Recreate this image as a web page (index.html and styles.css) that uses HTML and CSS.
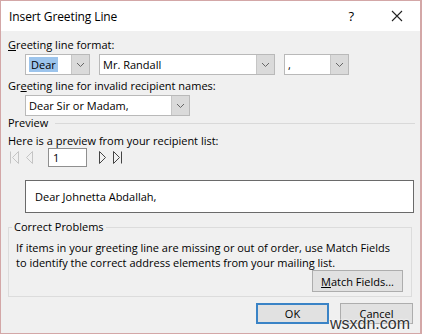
FILE: index.html
```html
<!DOCTYPE html>
<html>
<head>
<meta charset="utf-8">
<link rel="stylesheet" href="styles.css">
</head>
<body>
<div class="dialog">
  <div class="titlebar">
    <span class="title">Insert Greeting Line</span>
    <span class="help">?</span>
    <svg class="close" width="12" height="12" viewBox="0 0 12 12"><path d="M1 1L11 11M11 1L1 11" stroke="#222" stroke-width="1.1" fill="none"/></svg>
  </div>
  <div class="content">
    <div class="label l1"><u>G</u>reeting line format:</div>
    <div class="row r1">
      <div class="combo w-dear"><span class="field"><span class="sel">Dear</span></span><span class="drop"><svg width="9" height="6" viewBox="0 0 9 6"><path d="M1 1L4.5 4.5L8 1" stroke="#666" fill="none"/></svg></span></div>
      <div class="combo w-name"><span class="field">Mr. Randall</span><span class="drop"><svg width="9" height="6" viewBox="0 0 9 6"><path d="M1 1L4.5 4.5L8 1" stroke="#666" fill="none"/></svg></span></div>
      <div class="combo w-punct"><span class="field">,</span><span class="drop"><svg width="9" height="6" viewBox="0 0 9 6"><path d="M1 1L4.5 4.5L8 1" stroke="#666" fill="none"/></svg></span></div>
    </div>
    <div class="label l2">Gr<u>e</u>eting line for invalid recipient names:</div>
    <div class="row r2">
      <div class="combo w-invalid"><span class="field">Dear Sir or Madam,</span><span class="drop"><svg width="9" height="6" viewBox="0 0 9 6"><path d="M1 1L4.5 4.5L8 1" stroke="#666" fill="none"/></svg></span></div>
    </div>
    <div class="section"><span>Preview</span><span class="rule"></span></div>
    <div class="label l3">Here is a preview from your recipient list:</div>
    <div class="nav">
      <svg class="nav-ico" width="9" height="13" viewBox="0 0 9 13"><path d="M0.5 0.5V12.5M8.5 0.5V12.5L2.5 6.5Z" stroke="#c4c4c4" fill="none"/></svg>
      <svg class="nav-ico prev" width="9" height="13" viewBox="0 0 9 13"><path d="M7.5 0.5V12.5L1.5 6.5Z" stroke="#c4c4c4" fill="none"/></svg>
      <span class="num">1</span>
      <svg class="nav-ico next" width="9" height="13" viewBox="0 0 9 13"><path d="M1.5 0.5V12.5L7.5 6.5Z" stroke="#444" fill="none"/></svg>
      <svg class="nav-ico last" width="10" height="13" viewBox="0 0 10 13"><path d="M0.5 0.5V12.5L6.5 6.5Z M8.5 0.5V12.5" stroke="#444" fill="none"/></svg>
    </div>
    <div class="preview">Dear Johnetta Abdallah,</div>
    <fieldset class="group">
      <legend>Correct Problems</legend>
      <p class="para">If items in your greeting line are missing or out of order, use Match Fields<br>to identify the correct address elements from your mailing list.</p>
      <div class="group-actions"><button class="btn"><u>M</u>atch Fields...</button></div>
    </fieldset>
    <div class="actions">
      <button class="btn ok">OK</button>
      <button class="btn">Cancel</button>
    </div>
  </div>
  <span class="watermark">wsxdn.com</span>
</div>
</body>
</html>
```
FILE: styles.css
```css
* { box-sizing: border-box; }
html, body { margin: 0; padding: 0; }
body {
  font-family: "Open Sans", "Noto Sans", sans-serif;
  font-size: 11px;
  letter-spacing: 0;
  color: #000;
  background: #fff;
}
.dialog {
  position: relative;
  width: 422px;
  height: 334px;
  border: 1px solid #d3a7a7;
  border-right-width: 2px;
  background: #f0f0f0;
  display: flex;
  flex-direction: column;
}
.titlebar {
  height: 30px;
  background: #fff;
  display: flex;
  align-items: center;
  padding-left: 8px;
}
.title { font-size: 12px; flex: 1; letter-spacing: -0.1px; }
.help { font-size: 13px; margin-right: 37px; }
.close { margin-right: 17px; }
.content { padding-top: 6px; }
.label { line-height: 15px; padding-left: 7px; white-space: nowrap; }
.row { display: flex; padding-left: 24px; }
.r1 { margin-top: 2px; gap: 9px; }
.l2 { margin-top: 3px; }
.r2 { margin-top: 2px; }
.combo {
  display: flex;
  height: 21px;
  border: 1px solid #b9b9b9;
  background: #fff;
}
.field {
  flex: 1;
  display: flex;
  align-items: center;
  padding-left: 3px;
  white-space: nowrap;
}
.sel { background: #9cc4ec; padding: 0 2px; line-height: 15px; }
.drop {
  width: 18px;
  background: #dadada;
  border-left: 1px solid #c6c6c6;
  display: flex;
  align-items: center;
  justify-content: center;
}
.w-dear { width: 65px; }
.w-name { width: 176px; }
.w-punct { width: 65px; }
.w-invalid { width: 165px; }
.section {
  display: flex;
  align-items: center;
  padding-left: 7px;
  line-height: 14px;
  margin-right: 5px;
}
.rule { flex: 1; height: 1px; background: #d9d9d9; margin-left: 7px; }
.l3 { margin-top: 4px; line-height: 14px; }
.nav {
  display: flex;
  align-items: center;
  height: 19px;
  padding-left: 9px;
}
.nav-ico { display: block; }
.prev { margin-left: 6px; }
.num {
  width: 39px;
  height: 19px;
  margin-left: 14px;
  border: 1px solid #8f8f8f;
  background: #fff;
  padding-left: 4px;
  line-height: 17px;
}
.next { margin-left: 11px; }
.last { margin-left: 6px; }
.preview {
  margin: 13px 6px 0 24px;
  height: 33px;
  border: 1px solid #6a6a6a;
  background: #fff;
  padding-left: 9px;
  line-height: 31px;
}
.group {
  margin: 7px 8px 0 7px;
  border: 1px solid #dcdcdc;
  padding: 0 8px 4px 7px;
}
.group legend {
  padding: 0 2px;
  margin-left: -4px;
  line-height: 14px;
}
.para { margin: 6px 0 0 0; line-height: 15px; white-space: nowrap; }
.group-actions { display: flex; justify-content: flex-end; }
.btn {
  font-family: inherit;
  font-size: 11px;
  color: #000;
  background: #e1e1e1;
  border: 1px solid #adadad;
  height: 22px;
  padding: 0;
}
.group-actions .btn { width: 91px; }
.actions {
  display: flex;
  justify-content: flex-end;
  gap: 11px;
  margin: 6px 7px 0 0;
}
.actions .btn { width: 73px; height: 21px; }
.btn.ok { border: 2px solid #3a83c6; }
.watermark {
  position: absolute;
  right: 10px;
  bottom: 0;
  font-family: "Liberation Sans", sans-serif;
  font-size: 16px;
  color: #333;
  text-shadow: 0 0 2px #fff, 0 0 2px #fff;
}
```
